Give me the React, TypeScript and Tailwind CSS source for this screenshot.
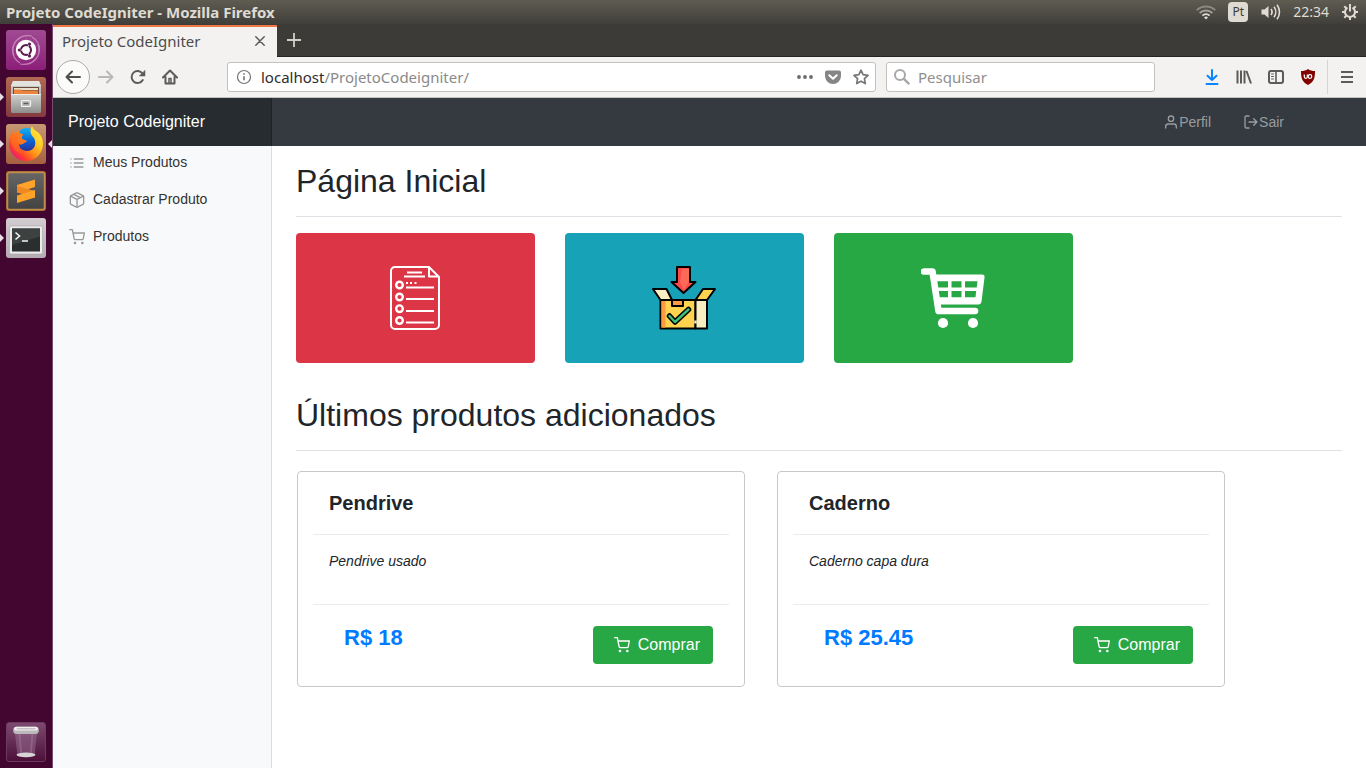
import type { ReactNode, SVGProps } from "react";

const UI = "font-['Noto_Sans','Open_Sans',sans-serif]";

function Feather({ children, size = 16, ...rest }: { children: ReactNode; size?: number } & SVGProps<SVGSVGElement>) {
  return (
    <svg
      width={size}
      height={size}
      viewBox="0 0 24 24"
      fill="none"
      stroke="currentColor"
      strokeWidth={2}
      strokeLinecap="round"
      strokeLinejoin="round"
      aria-hidden="true"
      {...rest}
    >
      {children}
    </svg>
  );
}

const CartIcon = () => (
  <Feather>
    <circle cx="9" cy="21" r="1" />
    <circle cx="20" cy="21" r="1" />
    <path d="M1 1h4l2.68 13.39a2 2 0 0 0 2 1.61h9.72a2 2 0 0 0 2-1.61L23 6H6" />
  </Feather>
);

const ListIcon = () => (
  <Feather>
    <path d="M8 6h13M8 12h13M8 18h13M3 6h.01M3 12h.01M3 18h.01" />
  </Feather>
);

const PackageIcon = () => (
  <Feather>
    <path d="M12.89 1.45l8 4A2 2 0 0 1 22 7.24v9.53a2 2 0 0 1-1.11 1.79l-8 4a2 2 0 0 1-1.79 0l-8-4a2 2 0 0 1-1.1-1.8V7.24a2 2 0 0 1 1.11-1.79l8-4a2 2 0 0 1 1.78 0z" />
    <path d="M2.32 6.16L12 11l9.68-4.84M12 22.76V11M7 3.5l10 5" />
  </Feather>
);

const UserIcon = () => (
  <Feather>
    <path d="M20 21v-2a4 4 0 0 0-4-4H8a4 4 0 0 0-4 4v2" />
    <circle cx="12" cy="7" r="4" />
  </Feather>
);

const LogOutIcon = () => (
  <Feather>
    <path d="M9 21H5a2 2 0 0 1-2-2V5a2 2 0 0 1 2-2h4M16 17l5-5-5-5M21 12H9" />
  </Feather>
);

/* ---------- Desktop panel ---------- */

function TopPanel() {
  return (
    <header className={`flex h-6 shrink-0 items-center justify-between bg-linear-to-b from-[#5f5c52] to-[#403f3a] pr-2 pl-[6px] text-[#dfdbd2] ${UI}`}>
      <h1 className="text-[15px] leading-6 font-bold">Projeto CodeIgniter - Mozilla Firefox</h1>
      <div className="flex items-center">
        <svg width="20" height="16" viewBox="0 0 20 16" fill="none" strokeWidth="1.8" aria-label="Wi-Fi">
          <path d="M0.7 6.2a13.5 13.5 0 0 1 18.6 0" stroke="#8c897f" />
          <path d="M3.6 9a9.4 9.4 0 0 1 12.8 0" stroke="#a5a298" />
          <path d="M6.4 11.6a5.4 5.4 0 0 1 7.2 0" stroke="#dfdbd2" />
          <path d="M8 13.4a3 3 0 0 1 4 0l-2 2z" fill="#dfdbd2" />
        </svg>
        <span className="ml-3 flex h-5 w-5 items-center justify-center rounded-sm bg-[#dfdbd2] text-[12px] text-[#3c3b37]">Pt</span>
        <svg className="ml-3" width="22" height="18" viewBox="0 0 22 18" fill="none" stroke="#dfdbd2" strokeWidth="1.6" aria-label="Som">
          <path d="M1.5 6.5h3L8.5 3v12l-4-3.500h-3z" fill="#dfdbd2" stroke="none" />
          <path d="M11 6c1.300 1.800 1.300 4.200 0 6M14 3.800c2.300 3 2.300 7.400 0 10.400M17 1.800c3.300 4.200 3.300 10.200 0 14.400" />
        </svg>
        <time className="ml-[11px] text-[14px] leading-6">22:34</time>
        <svg className="ml-[13px]" width="16" height="18" viewBox="0 0 16 18" fill="none" stroke="#dfdbd2" aria-label="Sistema">
          <path d="M5.500 4.600a5 5 0 1 0 5 0" strokeWidth="2" />
          <path d="M8 1v7.500" strokeWidth="2" />
          <path d="M0 9h3M13 9h3M8 14v3M2.300 3.300l2 2M13.700 3.300l-2 2M2.300 14.700l2-2M13.700 14.700l-2-2" strokeWidth="2" />
        </svg>
      </div>
    </header>
  );
}

/* ---------- Launcher ---------- */

function Tile({ label, tone, running, focused, children }: { label: string; tone: string; running?: boolean; focused?: boolean; children: ReactNode }) {
  return (
    <li className="relative flex h-10 justify-center">
      {running && (
        <svg className="absolute top-4 left-0" width="4" height="8" viewBox="0 0 4 8">
          <path d="M0 0l4 4-4 4z" fill="#e6dfe4" />
        </svg>
      )}
      {focused && (
        <svg className="absolute top-4 right-0" width="4" height="8" viewBox="0 0 4 8">
          <path d="M4 0L0 4l4 4z" fill="#e6dfe4" />
        </svg>
      )}
      <button aria-label={label} className={`flex h-10 w-10 items-center justify-center overflow-hidden rounded-[3px] ${tone}`}>
        {children}
      </button>
    </li>
  );
}

const UbuntuLogo = () => (
  <svg width="40" height="40" viewBox="0 0 40 40">
    <g fill="none" stroke="#e3b6da" strokeWidth="1.200" opacity="0.6">
      <path d="M8 26C4 14 12 4 26 6M14 33C4 27 4 14 14 8M32 14c4 12-4 22-18 20M26 7c10 6 10 19 0 25" />
    </g>
    <circle cx="20" cy="20" r="10.200" fill="#fff" />
    <circle cx="20" cy="20" r="4.900" fill="none" stroke="#5d1b4c" strokeWidth="2.300" />
    <g stroke="#fff" strokeWidth="1">
      <path d="M20 20h-8M20 20l4-7M20 20l4 7" />
    </g>
    <circle cx="20" cy="20" r="3.600" fill="#fff" />
    <g fill="#5d1b4c">
      <circle cx="13.300" cy="20" r="1.600" />
      <circle cx="23.500" cy="14.100" r="1.600" />
      <circle cx="23.500" cy="25.900" r="1.600" />
    </g>
  </svg>
);

const FilesLogo = () => (
  <svg width="40" height="40" viewBox="0 0 40 40">
    <defs>
      <linearGradient id="cabinet" x2="0" y2="1">
        <stop stopColor="#d2d2d0" />
        <stop offset="1" stopColor="#8e8e8c" />
      </linearGradient>
    </defs>
    <path d="M7 4h26l2 5v25q0 2-2 2H7q-2 0-2-2V9z" fill="url(#cabinet)" />
    <path d="M7 4h26l2 5H5z" fill="#e2e2df" />
    <path d="M7 10h26v7H7z" fill="#6a4a3a" />
    <path d="M8 11h24v2H8z" fill="#e9e0cc" />
    <path d="M8 12.500h7l1 1h16V17H8z" fill="#ec8440" />
    <path d="M5 17h30v17q0 2-2 2H7q-2 0-2-2z" fill="url(#cabinet)" />
    <path d="M5 17.500h30" stroke="#eeeeec" />
    <rect x="15.500" y="23.500" width="9" height="6" rx="1" fill="#bcbcba" stroke="#f2f2f0" strokeWidth="1.200" />
    <path d="M17.500 26.500h5" stroke="#5c5c5c" strokeWidth="1.500" />
  </svg>
);

const FirefoxLogo = () => (
  <svg width="40" height="40" viewBox="0 0 40 40">
    <defs>
      <linearGradient id="fox" x1="0.850" y1="0.100" x2="0.150" y2="0.850">
        <stop stopColor="#ffe63a" />
        <stop offset="0.300" stopColor="#ffc928" />
        <stop offset="0.600" stopColor="#ff8a16" />
        <stop offset="0.850" stopColor="#ff3c2f" />
        <stop offset="1" stopColor="#e9206e" />
      </linearGradient>
      <linearGradient id="globe" x2="0" y2="1">
        <stop stopColor="#12b2f4" />
        <stop offset="0.600" stopColor="#0a5fd0" />
        <stop offset="1" stopColor="#30309a" />
      </linearGradient>
    </defs>
    <circle cx="21" cy="15.500" r="11.500" fill="url(#globe)" />
    <path
      d="M5 10C3 13 3 17 3 20a17 17 0 0 0 34 0C37 14 34 9 30 7c-2-1-3-3-4-5-3 5-1 9 2 12 3 5 1 13-7 13-6 0-8-4-8-7 2 1 4 0 8-3l-5-2c-1-2 1-4 1-5-3 0-4-1-4-4l-4 4-3-3z"
      fill="url(#fox)"
    />
    <path d="M5 10l1-3 3 3 4-4c0 3 1 4 4 4 0 1-2 3-1 5l5 2c-4 3-6 4-8 3-2 3 0 7 3 9C9 29 4 22 5 10z" fill="#ff6a22" fillOpacity="0.700" />
  </svg>
);

const SublimeLogo = () => (
  <svg width="40" height="40" viewBox="0 0 40 40">
    <defs>
      <linearGradient id="slate" x2="0" y2="1">
        <stop stopColor="#666" />
        <stop offset="1" stopColor="#424242" />
      </linearGradient>
    </defs>
    <rect x="1.500" y="1.500" width="37" height="37" rx="2" fill="url(#slate)" stroke="#c18b48" strokeWidth="1.500" />
    <path d="M11 14L29 8.500v7.500L11 21.500z" fill="#ffa32b" />
    <path d="M11 15v6.500l18 5V20z" fill="#f08a20" />
    <path d="M29 19v7.500L11 32v-7.500z" fill="#ffa32b" />
  </svg>
);

const TerminalLogo = () => (
  <svg width="40" height="40" viewBox="0 0 40 40">
    <rect x="3.500" y="8" width="33" height="28" rx="1.500" fill="#ececec" stroke="#a5a5a5" strokeWidth="0.600" />
    <rect x="6" y="10.500" width="28" height="23" fill="#2b2e2e" />
    <path d="M6 10.500h28v8L6 27z" fill="#3d4140" />
    <path d="M9.500 14.500l4 3.500-4 3.500M16 23h6" fill="none" stroke="#f4f4f4" strokeWidth="1.600" />
  </svg>
);

const TrashLogo = () => (
  <svg width="40" height="40" viewBox="0 0 40 40">
    <path d="M8 8h24l-3 26q-9 4-18 0z" fill="#a07598" fillOpacity="0.450" />
    <path d="M13 9l2 24M27 9l-2 24" stroke="#c4a5bf" strokeOpacity="0.250" strokeWidth="2" />
    <ellipse cx="20" cy="33.500" rx="10" ry="2.500" fill="#d8d4d6" />
    <rect x="6.500" y="4" width="27" height="7.500" rx="3.700" fill="#bcb9ba" />
    <rect x="7.500" y="4" width="25" height="4" rx="2" fill="#f0efef" />
    <rect x="10" y="5.200" width="20" height="1.600" rx="0.800" fill="#c9bdc7" />
  </svg>
);

function Launcher() {
  return (
    <nav aria-label="Aplicativos" className="flex w-[53px] shrink-0 flex-col justify-between border-r border-[#7c4b74] bg-[#430631] pt-[6px] pb-[6px]">
      <ul className="flex flex-col gap-[7px]">
        <Tile label="Ubuntu" tone="bg-linear-to-b from-[#a04a93] to-[#8c1d78]"><UbuntuLogo /></Tile>
        <Tile label="Arquivos" tone="bg-linear-to-b from-[#b06a52] to-[#853a3f]" running><FilesLogo /></Tile>
        <Tile label="Firefox" tone="bg-linear-to-b from-[#c79873] to-[#a5603f]" running focused><FirefoxLogo /></Tile>
        <Tile label="Sublime Text" tone="bg-[#a36a35]" running><SublimeLogo /></Tile>
        <Tile label="Terminal" tone="bg-linear-to-b from-[#d3ccd1] to-[#b5acb3]" running><TerminalLogo /></Tile>
      </ul>
      <ul>
        <Tile label="Lixeira" tone="border border-[#6b3a5e] bg-linear-to-b from-[#7d4a71] to-[#4c0f39]"><TrashLogo /></Tile>
      </ul>
    </nav>
  );
}

/* ---------- Browser chrome ---------- */

function Tool({ label, children }: { label: string; children: ReactNode }) {
  return (
    <button aria-label={label} className="flex h-8 w-8 shrink-0 items-center justify-center">
      <svg width="16" height="16" viewBox="0 0 16 16" fill="none" stroke="#5b5b5b" strokeWidth="2" strokeLinecap="round" strokeLinejoin="round">
        {children}
      </svg>
    </button>
  );
}

function BrowserChrome() {
  return (
    <div className={`shrink-0 ${UI}`}>
      <div className="flex h-[33px] border-b border-[#252421] bg-[#3c3b37]">
        <div className="mt-px flex h-8 w-[224px] items-center justify-between border-t-2 border-[#f07746] bg-[#f3f2f1] pr-2 pb-[2px] pl-[9px]">
          <span className="text-[15px] leading-5 text-[#4c4c4c]">Projeto CodeIgniter</span>
          <button aria-label="Fechar aba" className="flex h-[18px] w-[18px] items-center justify-center">
            <svg width="10" height="10" viewBox="0 0 10 10" stroke="#5b5b5b" strokeWidth="1.500" strokeLinecap="round">
              <path d="M0.800 0.800l8.400 8.400M9.200 0.800L0.800 9.200" />
            </svg>
          </button>
        </div>
        <button aria-label="Nova aba" className="flex w-[34px] items-center justify-center">
          <svg width="14" height="14" viewBox="0 0 14 14" stroke="#d2cfc8" strokeWidth="1.800">
            <path d="M7 0v14M0 7h14" />
          </svg>
        </button>
      </div>

      <div className="flex h-[41px] items-center border-b border-[#c4c2bf] bg-[#f3f2f1] pr-[3px] pl-[3px]">
        <button aria-label="Voltar" className="flex h-[34px] w-[34px] shrink-0 items-center justify-center rounded-full border border-[#acaaa7] bg-[#fbfbfa]">
          <svg width="16" height="16" viewBox="0 0 16 16" fill="none" stroke="#4e4e4e" strokeWidth="2" strokeLinecap="round" strokeLinejoin="round">
            <path d="M15 8H1.500M7 2.500L1.500 8L7 13.500" />
          </svg>
        </button>
        <Tool label="Avançar">
          <path d="M1 8h13.500M9 2.500L14.500 8L9 13.500" stroke="#b9b8b6" />
        </Tool>
        <Tool label="Recarregar">
          <path d="M12.800 11A6 6 0 1 1 12.500 4.500L13.500 6" />
          <path d="M15 1.500V7H9.500z" fill="#5b5b5b" strokeWidth="0.500" />
        </Tool>
        <Tool label="Página inicial">
          <path d="M1 8.500L8 1.500l7 7M3.500 8v6.500h9V8" />
          <path d="M7 14V9.500h2V14" strokeWidth="1.500" />
        </Tool>

        <div className="ml-[41px] flex h-[30px] min-w-0 flex-1 items-center rounded-[3px] border border-[#c3c1be] bg-white pl-2">
          <svg width="16" height="16" viewBox="0 0 16 16" fill="none" stroke="#737373" aria-hidden="true">
            <circle cx="8" cy="8" r="6.500" strokeWidth="1.200" />
            <path d="M8 7.300v4M8 4.300v1.500" strokeWidth="1.600" />
          </svg>
          <div role="textbox" aria-label="Endereço" className="ml-[9px] min-w-0 flex-1 truncate text-[15px] leading-5 text-[#8a8a8a]">
            <span className="text-[#2d2d2d]">localhost</span>/ProjetoCodeigniter/
          </div>
          <button aria-label="Ações da página" className="flex w-7 justify-center">
            <svg width="16" height="16" viewBox="0 0 16 16" fill="#6b6b6b">
              <circle cx="2" cy="8" r="1.900" /><circle cx="8" cy="8" r="1.900" /><circle cx="14" cy="8" r="1.900" />
            </svg>
          </button>
          <button aria-label="Pocket" className="flex w-7 justify-center">
            <svg width="16" height="16" viewBox="0 0 16 16">
              <path d="M2 1.500h12a2 2 0 0 1 2 2V7a8 8 0 0 1-16 0V3.500a2 2 0 0 1 2-2z" fill="#858585" />
              <path d="M4.300 6.300L8 9.800l3.700-3.500" fill="none" stroke="#fff" strokeWidth="2" strokeLinecap="round" strokeLinejoin="round" />
            </svg>
          </button>
          <button aria-label="Favoritar" className="flex w-7 justify-center">
            <svg width="16" height="16" viewBox="0 0 16 16" fill="none" stroke="#767676" strokeWidth="1.700" strokeLinejoin="round">
              <path d="M8 1.200l2.100 4.500 4.900.6-3.600 3.400.9 4.900L8 12.200l-4.300 2.400.9-4.900L1 6.300l4.900-.6z" />
            </svg>
          </button>
        </div>

        <label className="ml-[10px] flex h-[30px] w-[269px] items-center gap-2 rounded-[3px] border border-[#c3c1be] bg-white px-[7px]">
          <svg className="shrink-0" width="16" height="16" viewBox="0 0 16 16" fill="none" stroke="#a8a8a8" strokeWidth="2" aria-hidden="true">
            <circle cx="6" cy="6" r="5" />
            <path d="M9.700 9.700l5.500 5.500" strokeWidth="2.400" />
          </svg>
          <input aria-label="Pesquisar" placeholder="Pesquisar" className="w-full bg-transparent text-[15px] leading-5 outline-none placeholder:text-[#8f8f8f]" />
        </label>

        <div className="ml-[41px] flex items-center">
          <Tool label="Downloads">
            <path d="M8 1v10M3.500 6.700L8 11l4.500-4.300M2.500 15h11" stroke="#0a84ff" />
          </Tool>
          <Tool label="Biblioteca">
            <path d="M1.500 1.500v13M5 1.500v13M8.500 1.500v13M10.500 2l4.500 12.500" strokeWidth="2" strokeLinecap="butt" />
          </Tool>
          <Tool label="Painel lateral">
            <rect x="1" y="2" width="14" height="12" rx="2" />
            <path d="M8 2v12" strokeWidth="1.600" />
            <path d="M3.500 5h2M3.500 7.500h2M3.500 10h2" strokeWidth="1" />
          </Tool>
          <button aria-label="uBlock" className="flex h-8 w-8 items-center justify-center">
            <svg width="16" height="16" viewBox="0 0 16 16">
              <path d="M8 0c2 1.500 4 2 7 2 0 7-1 11-7 14C2 13 1 9 1 2c3 0 5-.5 7-2z" fill="#800000" />
              <path d="M4.300 5.500v2.300a1.500 1.500 0 0 0 3 0V5.500" fill="none" stroke="#fff" strokeWidth="1.200" />
              <circle cx="10" cy="7.500" r="1.800" fill="none" stroke="#fff" strokeWidth="1.200" />
            </svg>
          </button>
          <div className="mr-[3px] ml-[3px] h-[34px] w-px bg-[#d6d4d1]" />
          <Tool label="Menu">
            <path d="M2 3h12M2 8h12M2 13h12" strokeLinecap="butt" />
          </Tool>
        </div>
      </div>
    </div>
  );
}

/* ---------- Application page ---------- */

const DocumentArt = () => (
  <svg width="64" height="64" viewBox="0 0 64 64" fill="none" stroke="#fff" strokeWidth="2" strokeLinejoin="round">
    <path d="M12 1h34l10 10v48a4 4 0 0 1-4 4H12a4 4 0 0 1-4-4V5a4 4 0 0 1 4-4z" />
    <path d="M46 1v9.500h10" />
    <path d="M24 6.500h15M21 10.500h21M23 21.500h28M23 33h28M23 45h28M23 56.500h28" />
    <path d="M23 17h2M27 17h2M31.500 17h2" />
    <g strokeWidth="2.400">
      <circle cx="16.500" cy="19" r="3.300" />
      <circle cx="16.500" cy="31" r="3.300" />
      <circle cx="16.500" cy="42.700" r="3.300" />
      <circle cx="16.500" cy="54.500" r="3.300" />
    </g>
  </svg>
);

const BoxArt = () => (
  <svg width="64" height="64" viewBox="0 0 64 64" stroke="#000" strokeWidth="2" strokeLinejoin="round" strokeLinecap="round">
    <path d="M25 1h13v15h5.500L31.500 27 19.500 16H25z" fill="#fd4a4a" />
    <path d="M30 3h7v13l-5 8-4-8z" fill="#ff6a58" stroke="none" />
    <path d="M8.500 34h35v28.500h-35z" fill="#ffd34f" />
    <path d="M9.500 35h4v26.500h-4z" fill="#ff9a3d" stroke="none" />
    <path d="M43.500 34H55v28.500H43.500z" fill="#f8eec2" />
    <path d="M1 23h13.500L20 34H8.500z" fill="#f8eec2" />
    <path d="M63 23H51l-7.500 11H55z" fill="#ffd34f" />
    <path d="M20 34h11v6H20z" fill="#fd9b45" />
    <path d="M17.500 50l5.500 6 13.500-12.500" fill="none" strokeWidth="5.500" />
    <path d="M17.500 50l5.500 6 13.500-12.500" fill="none" stroke="#3cc07a" strokeWidth="2.400" />
    <path d="M43.500 54.500v3" stroke="#f8eec2" strokeWidth="2.400" strokeLinecap="butt" />
  </svg>
);

const CartArt = () => (
  <svg width="64" height="64" viewBox="0 0 64 64" fill="#fff">
    <path d="M3 5.500h8.500L17.500 45H54" fill="none" stroke="#fff" strokeWidth="6.600" strokeLinecap="round" strokeLinejoin="round" />
    <path
      fillRule="evenodd"
      d="M12 8.500h49q3 0 2.500 3l-3 24q-.5 3-3 3H16zM15.500 15.300l.8 6.200H27v-6.200zM30.500 15.300v6.200h10v-6.200zM44 15.300v6.200h11.700l.8-6.200zM16.800 25l.8 6.300H27V25zM30.500 25v6.300h10V25zM44 25v6.300h10.500l.7-6.300z"
    />
    <circle cx="22" cy="57" r="5.100" />
    <circle cx="52" cy="57" r="5.100" />
  </svg>
);

const menu = [
  { label: "Meus Produtos", icon: <ListIcon /> },
  { label: "Cadastrar Produto", icon: <PackageIcon /> },
  { label: "Produtos", icon: <CartIcon /> },
];

const shortcuts = [
  { label: "Meus Produtos", tone: "bg-[#dc3545]", art: <DocumentArt /> },
  { label: "Cadastrar Produto", tone: "bg-[#17a2b8]", art: <BoxArt /> },
  { label: "Produtos", tone: "bg-[#28a745]", art: <CartArt /> },
];

const products = [
  { name: "Pendrive", description: "Pendrive usado", price: "R$ 18" },
  { name: "Caderno", description: "Caderno capa dura", price: "R$ 25.45" },
];

function SectionTitle({ children }: { children: ReactNode }) {
  return <h2 className="border-b border-[#dee2e6] pb-4 text-[32px] leading-[38px]">{children}</h2>;
}

function ProductCard({ name, description, price }: { name: string; description: string; price: string }) {
  return (
    <article className="rounded border border-[#c6c8ca] px-[15px]">
      <h3 className="border-b border-[#e9ecef] px-4 py-4 text-[20px] leading-[30px] font-bold">{name}</h3>
      <p className="h-[70px] border-b border-[#e9ecef] px-4 pt-4 text-[14px] leading-[21px] italic">{description}</p>
      <div className="flex items-start justify-between pt-[21px] pr-4 pb-[22px] pl-[31px]">
        <strong className="text-[22px] leading-6 text-[#007bff]">{price}</strong>
        <button className="flex h-[38px] items-center gap-2 rounded bg-[#28a745] pr-[13px] pl-[21px] text-[16px] leading-6 text-white">
          <CartIcon />
          Comprar
        </button>
      </div>
    </article>
  );
}

function Page() {
  return (
    <div className="flex min-h-0 flex-1 flex-col bg-white font-['Liberation_Sans',Arial,sans-serif] text-[#212529]">
      <div className="flex h-12 shrink-0 items-center bg-[#343a40]">
        <a href="#inicio" className="flex h-12 w-[219px] shrink-0 items-center border-r border-[#1f2326] bg-[#272c30] pl-[15px] text-[16px] leading-6 text-white">
          Projeto Codeigniter
        </a>
        <nav aria-label="Conta" className="ml-auto flex gap-8 pr-[82px] text-[14px] leading-[21px] text-[#999c9f]">
          <a href="#perfil" className="flex items-center"><UserIcon />Perfil</a>
          <a href="#sair" className="flex items-center"><LogOutIcon />Sair</a>
        </nav>
      </div>

      <div className="flex min-h-0 flex-1">
        <aside className="w-[219px] shrink-0 border-r border-[#dcdfe2] bg-[#f8f9fa] pt-[6px]">
          <ul className="flex flex-col gap-4 pl-4">
            {menu.map((item) => (
              <li key={item.label}>
                <a href="#menu" className="flex items-center gap-2 text-[14px] leading-[21px] text-[#333]">
                  <span className="text-[#999]">{item.icon}</span>
                  {item.label}
                </a>
              </li>
            ))}
          </ul>
        </aside>

        <main className="min-w-0 flex-1 px-6 pt-4">
          <SectionTitle>Página Inicial</SectionTitle>
          <div className="mt-4 mb-[33px] grid grid-cols-4 gap-[30px]">
            {shortcuts.map((s) => (
              <a key={s.label} href="#atalho" aria-label={s.label} className={`flex h-[130px] items-center justify-center rounded pr-[2px] ${s.tone}`}>
                {s.art}
              </a>
            ))}
          </div>

          <SectionTitle>Últimos produtos adicionados</SectionTitle>
          <div className="mt-5 grid grid-cols-2 gap-8 pr-[117px] pl-px">
            {products.map((p) => (
              <ProductCard key={p.name} {...p} />
            ))}
          </div>
        </main>
      </div>
    </div>
  );
}

export default function App() {
  return (
    <div className="flex h-screen flex-col overflow-hidden">
      <TopPanel />
      <div className="flex min-h-0 flex-1">
        <Launcher />
        <div className="flex min-w-0 flex-1 flex-col">
          <BrowserChrome />
          <Page />
        </div>
      </div>
    </div>
  );
}
